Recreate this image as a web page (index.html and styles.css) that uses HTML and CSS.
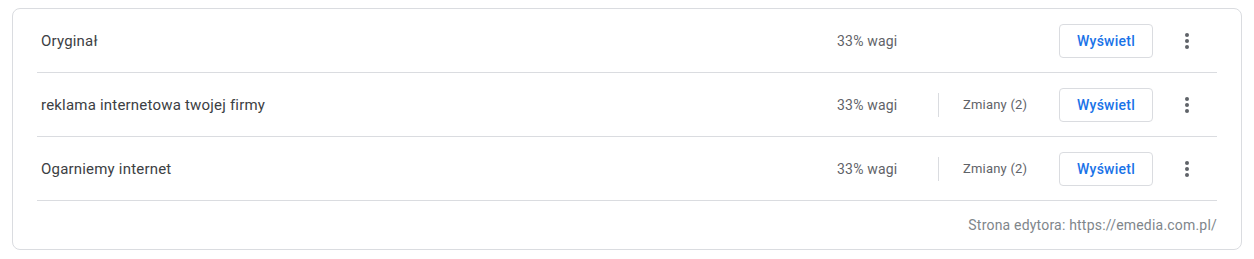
FILE: index.html
```html
<!DOCTYPE html>
<html lang="pl">
<head>
<meta charset="utf-8">
<title>Warianty</title>
<link rel="stylesheet" href="styles.css">
</head>
<body>
<div class="card">
  <div class="row">
    <div class="name">Oryginał</div>
    <div class="weight">33% wagi</div>
    <div class="vdivider hidden"></div>
    <div class="changes"></div>
    <button class="btn">Wyświetl</button>
    <span class="kebab"><svg viewBox="0 0 24 24" width="24" height="24"><circle cx="12" cy="6" r="2"/><circle cx="12" cy="12" r="2"/><circle cx="12" cy="18" r="2"/></svg></span>
  </div>
  <div class="row">
    <div class="name">reklama internetowa twojej firmy</div>
    <div class="weight">33% wagi</div>
    <div class="vdivider"></div>
    <div class="changes">Zmiany (2)</div>
    <button class="btn">Wyświetl</button>
    <span class="kebab"><svg viewBox="0 0 24 24" width="24" height="24"><circle cx="12" cy="6" r="2"/><circle cx="12" cy="12" r="2"/><circle cx="12" cy="18" r="2"/></svg></span>
  </div>
  <div class="row">
    <div class="name">Ogarniemy internet</div>
    <div class="weight">33% wagi</div>
    <div class="vdivider"></div>
    <div class="changes">Zmiany (2)</div>
    <button class="btn">Wyświetl</button>
    <span class="kebab"><svg viewBox="0 0 24 24" width="24" height="24"><circle cx="12" cy="6" r="2"/><circle cx="12" cy="12" r="2"/><circle cx="12" cy="18" r="2"/></svg></span>
  </div>
  <div class="footer">Strona edytora: https://emedia.com.pl/</div>
</div>
</body>
</html>
```
FILE: styles.css
```css
html, body {
  margin: 0;
  padding: 0;
  background: #ffffff;
}
body {
  padding: 8px 12px 0 12px;
  font-family: Roboto, "Liberation Sans", Arial, sans-serif;
  letter-spacing: 0.2px;
}
.card {
  box-sizing: border-box;
  width: 1230px;
  border: 1px solid #dadce0;
  border-radius: 8px;
  padding: 0 24px;
}
.row {
  display: flex;
  align-items: center;
  height: 63px;
  border-bottom: 1px solid #dadce0;
  padding-left: 4px;
}
.name {
  flex: 1;
  font-size: 15px;
  color: #3c4043;
}
.weight {
  width: 101px;
  font-size: 14px;
  color: #5f6368;
}
.vdivider {
  width: 1px;
  height: 24px;
  background: #dadce0;
}
.vdivider.hidden {
  visibility: hidden;
}
.changes {
  box-sizing: border-box;
  width: 120px;
  padding-left: 24px;
  font-size: 13px;
  color: #5f6368;
}
.btn {
  box-sizing: border-box;
  height: 34px;
  width: 94px;
  background: #fff;
  border: 1px solid #dadce0;
  border-radius: 4px;
  font-family: Roboto, "Liberation Sans", Arial, sans-serif;
  font-size: 14px;
  font-weight: 500;
  letter-spacing: 0.25px;
  color: #1a73e8;
  padding: 0;
}
.kebab {
  display: flex;
  width: 24px;
  height: 24px;
  margin-left: 22px;
  margin-right: 18px;
  fill: #5f6368;
}
.footer {
  height: 48px;
  display: flex;
  align-items: center;
  justify-content: flex-end;
  font-size: 14px;
  color: #80868b;
}
```
